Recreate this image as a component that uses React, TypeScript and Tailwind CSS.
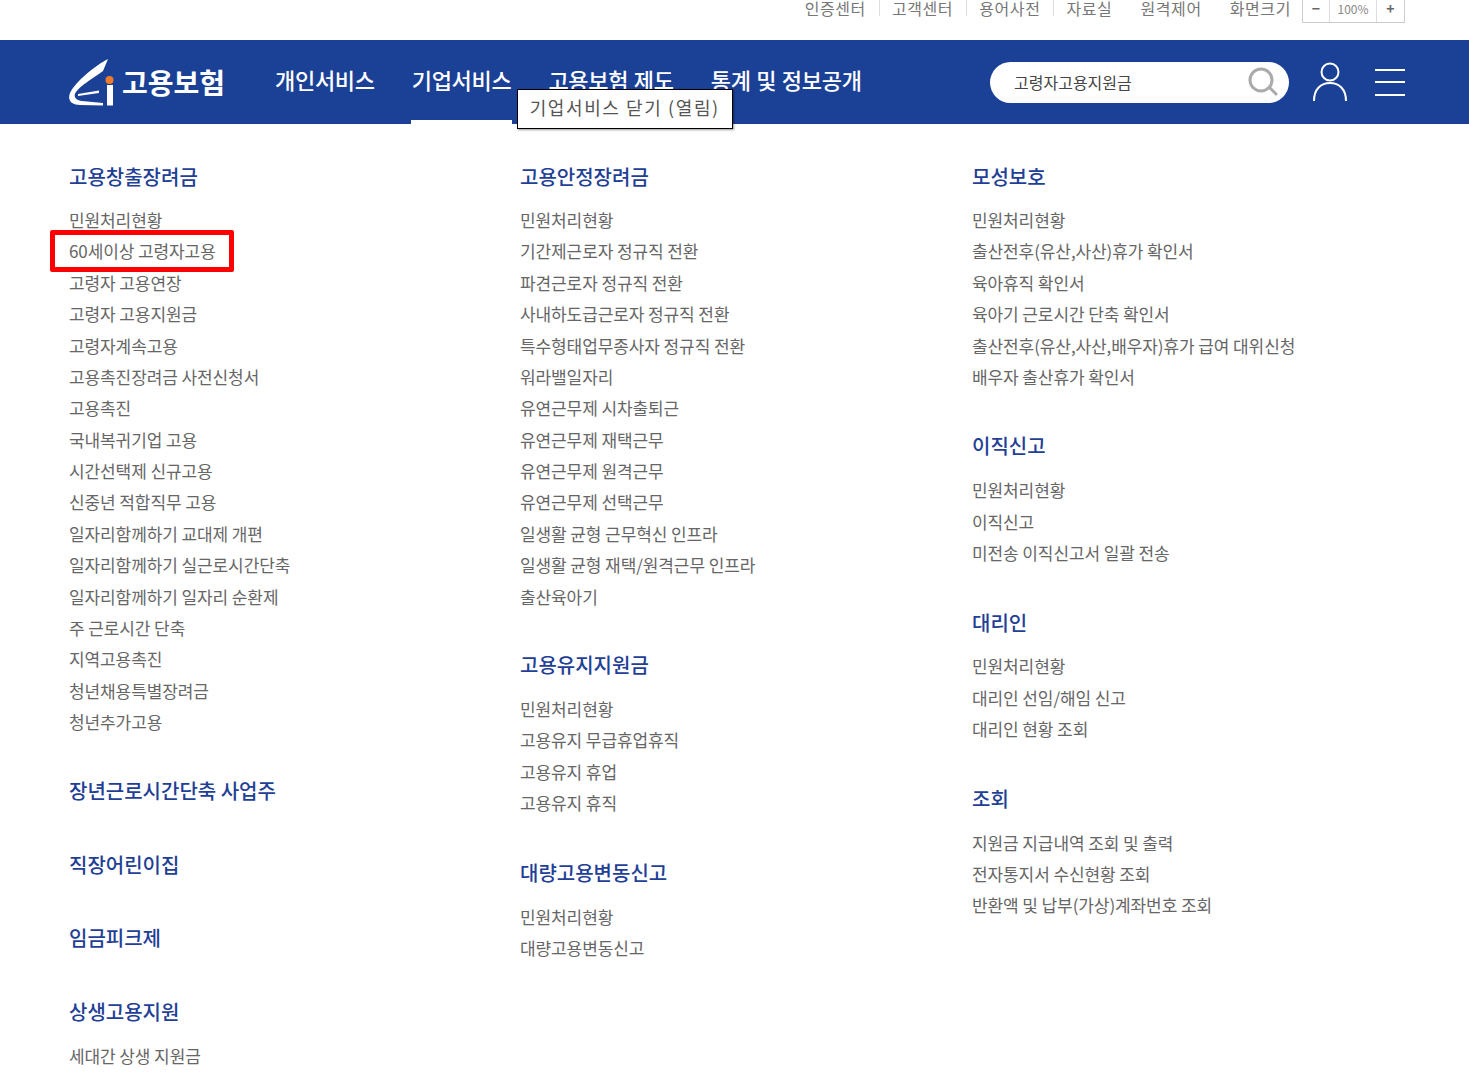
const font = { fontFamily: '"Noto Sans CJK KR", "Noto Sans", sans-serif' };

const topLinks = ["인증센터", "고객센터", "용어사전", "자료실", "원격제어", "화면크기"];

const navItems = ["개인서비스", "기업서비스", "고용보험 제도", "통계 및 정보공개"];

type Section = { title: string; items: string[]; gapClass: string };

const col1: Section[] = [
  {
    title: "고용창출장려금",
    gapClass: "",
    items: [
      "민원처리현황",
      "60세이상 고령자고용",
      "고령자 고용연장",
      "고령자 고용지원금",
      "고령자계속고용",
      "고용촉진장려금 사전신청서",
      "고용촉진",
      "국내복귀기업 고용",
      "시간선택제 신규고용",
      "신중년 적합직무 고용",
      "일자리함께하기 교대제 개편",
      "일자리함께하기 실근로시간단축",
      "일자리함께하기 일자리 순환제",
      "주 근로시간 단축",
      "지역고용촉진",
      "청년채용특별장려금",
      "청년추가고용",
    ],
  },
  { title: "장년근로시간단축 사업주", gapClass: "mt-[38px]", items: [] },
  { title: "직장어린이집", gapClass: "mt-[44px]", items: [] },
  { title: "임금피크제", gapClass: "mt-[43px]", items: [] },
  { title: "상생고용지원", gapClass: "mt-[44px]", items: ["세대간 상생 지원금"] },
];

const col2: Section[] = [
  {
    title: "고용안정장려금",
    gapClass: "",
    items: [
      "민원처리현황",
      "기간제근로자 정규직 전환",
      "파견근로자 정규직 전환",
      "사내하도급근로자 정규직 전환",
      "특수형태업무종사자 정규직 전환",
      "워라밸일자리",
      "유연근무제 시차출퇴근",
      "유연근무제 재택근무",
      "유연근무제 원격근무",
      "유연근무제 선택근무",
      "일생활 균형 근무혁신 인프라",
      "일생활 균형 재택/원격근무 인프라",
      "출산육아기",
    ],
  },
  {
    title: "고용유지지원금",
    gapClass: "mt-[38px]",
    items: ["민원처리현황", "고용유지 무급휴업휴직", "고용유지 휴업", "고용유지 휴직"],
  },
  { title: "대량고용변동신고", gapClass: "mt-[39px]", items: ["민원처리현황", "대량고용변동신고"] },
];

const col3: Section[] = [
  {
    title: "모성보호",
    gapClass: "",
    items: [
      "민원처리현황",
      "출산전후(유산,사산)휴가 확인서",
      "육아휴직 확인서",
      "육아기 근로시간 단축 확인서",
      "출산전후(유산,사산,배우자)휴가 급여 대위신청",
      "배우자 출산휴가 확인서",
    ],
  },
  { title: "이직신고", gapClass: "mt-[39px]", items: ["민원처리현황", "이직신고", "미전송 이직신고서 일괄 전송"] },
  { title: "대리인", gapClass: "mt-[39px]", items: ["민원처리현황", "대리인 선임/해임 신고", "대리인 현황 조회"] },
  {
    title: "조회",
    gapClass: "mt-[39px]",
    items: ["지원금 지급내역 조회 및 출력", "전자통지서 수신현황 조회", "반환액 및 납부(가상)계좌번호 조회"],
  },
];

function Logo() {
  return (
    <svg width="46" height="47" viewBox="0 0 46 47" className="shrink-0">
      <path d="M40 0 C28 6 8 22 2 34 C-1 42 4 46 12 46 L35 46.5 L35 44 L14 42 C7 41 5 37 8 33 C12 27 24 20 35 12 Z" fill="#fff" />
      <path d="M10 35 L31 31.5 L31 34 L10 37 Z" fill="#fff" />
      <rect x="39" y="26" width="6" height="20.5" fill="#fff" />
      <circle cx="41.5" cy="21" r="4" fill="#ee7a2b" />
    </svg>
  );
}

function TopBar() {
  return (
    <div className="flex h-10 items-start justify-end overflow-hidden pr-[64px] text-[16px] text-[#777]">
      <div className="-mt-[5px] flex items-center">
        {topLinks.map((label, i) => (
          <span key={label} className="flex items-center pb-[2px]">
            <span className={i > 2 ? "mr-[28px] tracking-[0.6px]" : "tracking-[0.6px]"}>{label}</span>
            {i < 3 && <span className="ml-[13px] mr-[12px] h-4 w-px bg-[#ddd]" />}
          </span>
        ))}
        <div className="-mt-[1px] -ml-[17px] flex h-[29px] border border-[#ccc] text-[#666]">
          <span className="flex w-[27px] items-center justify-center border-r border-[#ddd] text-[14px] font-bold">−</span>
          <span className="flex w-[47px] items-center justify-center border-r border-[#ddd] text-[12px] text-[#888]">100%</span>
          <span className="flex w-[27px] items-center justify-center text-[14px] font-bold">+</span>
        </div>
      </div>
    </div>
  );
}

function Header() {
  return (
    <header className="flex h-[84px] items-center bg-[#1b4197] pl-[68px] pr-[64px] text-white">
      <div className="flex w-[207px] items-center gap-[8px]">
        <Logo />
        <span className="text-[28px] font-bold leading-none">고용보험</span>
      </div>
      <nav className="flex h-full gap-[37px]">
        {navItems.map((label, i) => (
          <div key={label} className="relative flex h-full items-center pb-[6px]">
            <span className="text-[22px] font-medium tracking-[-0.3px] whitespace-nowrap [word-spacing:1px]">{label}</span>
            {i === 1 && <span className="absolute bottom-0 -left-px -right-px h-[4px] bg-white" />}
            {i === 1 && (
              <span className="absolute left-[105px] top-[49px] z-10 flex h-[40px] w-[216px] items-center justify-center whitespace-nowrap border border-black bg-white pb-[3px] text-[18px] tracking-[1.6px] text-[#555] shadow-[1px_1px_2px_rgba(0,0,0,0.4)]">
                기업서비스 닫기 (열림)
              </span>
            )}
          </div>
        ))}
      </nav>
      <div className="ml-auto flex items-center">
        <div className="flex h-[41px] w-[299px] items-center justify-between rounded-full bg-white pl-[24px] pr-[11px]">
          <span className="text-[16px] text-[#444]">고령자고용지원금</span>
          <svg width="30" height="30" viewBox="0 0 30 30" fill="none" stroke="#aaa" strokeWidth="3">
            <circle cx="13" cy="13" r="11" />
            <path d="M22 21 L28 27" strokeLinecap="round" />
          </svg>
        </div>
        <svg width="36" height="40" viewBox="0 0 36 40" fill="none" stroke="#fff" strokeWidth="2" className="ml-[23px]">
          <circle cx="18" cy="10" r="8.5" />
          <path d="M2 39 C2 27 9 21 18 21 C27 21 34 27 34 39" />
        </svg>
        <div className="ml-[27px] flex h-[27px] w-[30px] flex-col justify-between">
          <span className="h-[2px] bg-white" />
          <span className="h-[2px] bg-white" />
          <span className="h-[2px] bg-white" />
        </div>
      </div>
    </header>
  );
}

function Column({ sections, widthClass }: { sections: Section[]; widthClass: string }) {
  return (
    <div className={`${widthClass} shrink-0`}>
      {sections.map((section, i) => (
        <section key={section.title} className={section.gapClass}>
          <h3 className="text-[20px] font-medium leading-[30px] text-[#1f4096]">{section.title}</h3>
          {section.items.length > 0 && (
            <ul className={i === 0 ? "mt-[12px]" : "mt-[13px]"}>
              {section.items.map((item) => (
                <li key={item} className="relative flex h-[31.4px] items-center whitespace-nowrap text-[17px] tracking-[-0.1px] text-[#666]">
                  {item}
                  {item === "60세이상 고령자고용" && (
                    <span className="absolute -left-[19px] top-[-5px] h-[42px] w-[184px] rounded-[2px] border-[5px] border-[#ff0000]" />
                  )}
                </li>
              ))}
            </ul>
          )}
        </section>
      ))}
    </div>
  );
}

export default function App() {
  return (
    <div className="min-h-[1089px] overflow-hidden bg-white" style={font}>
      <TopBar />
      <Header />
      <main className="flex pl-[69px] pt-[38px]">
        <Column sections={col1} widthClass="w-[451px]" />
        <Column sections={col2} widthClass="w-[452px]" />
        <Column sections={col3} widthClass="w-[451px]" />
      </main>
    </div>
  );
}
